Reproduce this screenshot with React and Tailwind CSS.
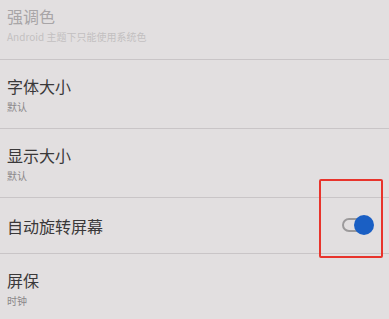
import React from 'react';

const Divider = () => <div className="h-px bg-[#c9c5c7]" />;

const Row = ({ title, subtitle, height, dim, children }) => (
  <div className={`flex items-center justify-between pl-[7px] ${height}`}>
    <div className="flex flex-col">
      <span className={`text-[16px] leading-[22px] ${dim ? 'text-[#a8a5a7]' : 'text-[#3a3839]'}`}>{title}</span>
      {subtitle && (
        <span className={`mt-[3px] text-[10px] leading-[14px] ${dim ? 'text-[#c2bfc1]' : 'text-[#8a8789]'}`}>{subtitle}</span>
      )}
    </div>
    {children}
  </div>
);

export default function App() {
  return (
    <div
      className="w-[389px] h-[319px] overflow-hidden bg-[#e2dfe0]"
      style={{ fontFamily: '"Noto Sans CJK SC", "Noto Sans", sans-serif' }}
    >
      <div className="flex flex-col -mt-[10px]">
        <Row title="强调色" subtitle="Android 主题下只能使用系统色" height="h-[69px]" dim />
        <Divider />
        <Row title="字体大小" subtitle="默认" height="h-[68px]" />
        <Divider />
        <Row title="显示大小" subtitle="默认" height="h-[68px]" />
        <Divider />
        <Row title="自动旋转屏幕" height="h-[55px]">
          <div className="relative mr-[6px] w-[64px] h-[55px]">
            <div className="absolute -top-[19px] left-0 w-[64px] h-[79px] border-2 border-[#e8342c] rounded-[2px]" />
            <div className="absolute top-[20px] left-[23px] w-[26px] h-[14px] rounded-full border-2 border-[#9c9a9b]" />
            <div className="absolute top-[17px] left-[35px] w-[20px] h-[20px] rounded-full bg-[#1a5fc4]" />
          </div>
        </Row>
        <Divider />
        <Row title="屏保" subtitle="时钟" height="h-[68px]" />
      </div>
    </div>
  );
}
